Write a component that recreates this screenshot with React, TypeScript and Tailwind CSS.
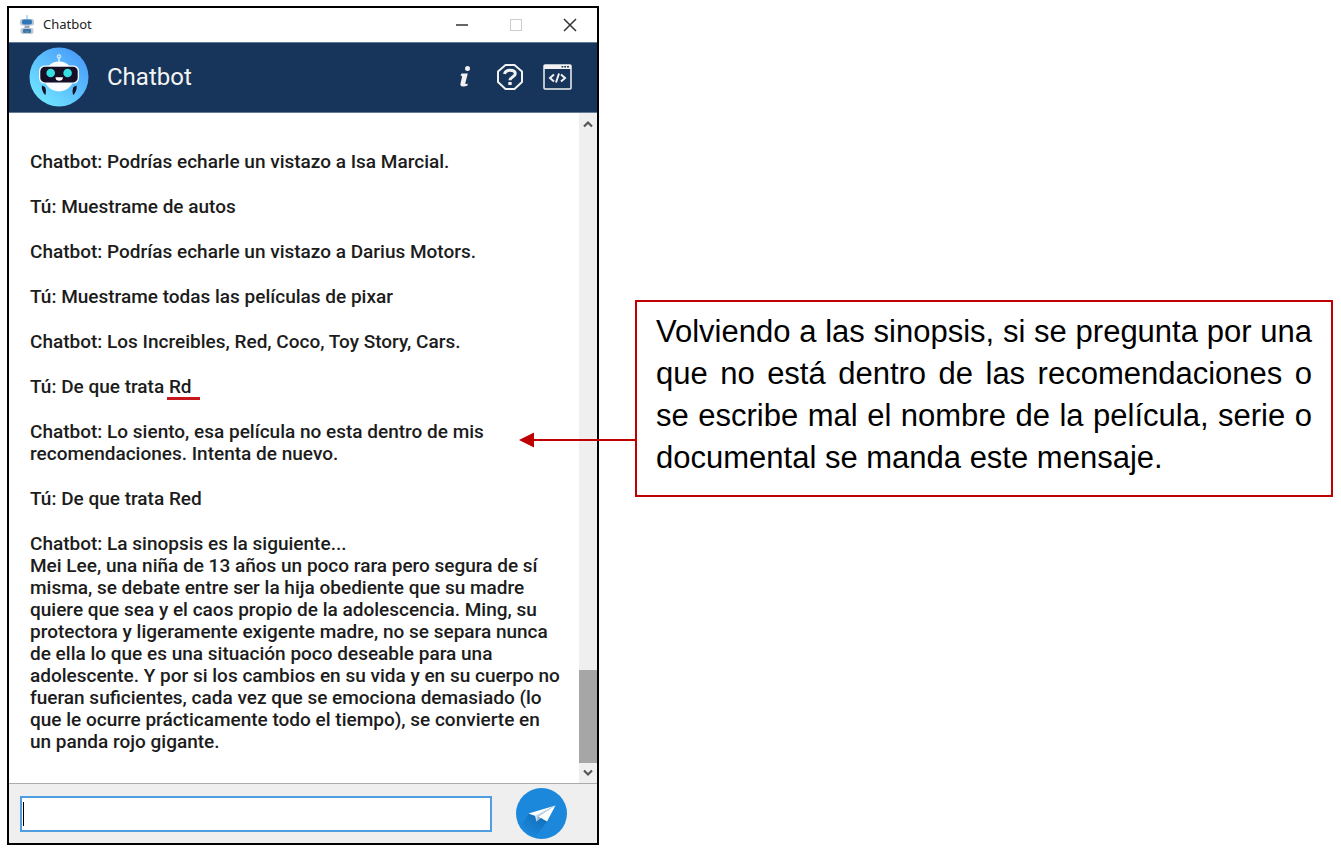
import React from "react";

const messages: { from: string; lines: React.ReactNode[] }[] = [
  { from: "Chatbot", lines: ["Podrías echarle un vistazo a Isa Marcial."] },
  { from: "Tú", lines: ["Muestrame de autos"] },
  { from: "Chatbot", lines: ["Podrías echarle un vistazo a Darius Motors."] },
  { from: "Tú", lines: ["Muestrame todas las películas de pixar"] },
  { from: "Chatbot", lines: ["Los Increibles, Red, Coco, Toy Story, Cars."] },
  {
    from: "Tú",
    lines: [
      <React.Fragment key="rd">
        De que trata{" "}
        <span className="relative">
          Rd
          <span className="absolute -right-2 -bottom-0.5 -left-0.5 h-[3px] bg-[#c8161d]" />
        </span>
      </React.Fragment>,
    ],
  },
  {
    from: "Chatbot",
    lines: ["Lo siento, esa película no esta dentro de mis", "recomendaciones. Intenta de nuevo."],
  },
  { from: "Tú", lines: ["De que trata Red"] },
  {
    from: "Chatbot",
    lines: [
      "La sinopsis es la siguiente...",
      "Mei Lee, una niña de 13 años un poco rara pero segura de sí",
      "misma, se debate entre ser la hija obediente que su madre",
      "quiere que sea y el caos propio de la adolescencia. Ming, su",
      "protectora y ligeramente exigente madre, no se separa nunca",
      "de ella lo que es una situación poco deseable para una",
      "adolescente. Y por si los cambios en su vida y en su cuerpo no",
      "fueran suficientes, cada vez que se emociona demasiado (lo",
      "que le ocurre prácticamente todo el tiempo), se convierte en",
      "un panda rojo gigante.",
    ],
  },
];

function MiniRobot() {
  return (
    <svg viewBox="0 0 16 20" className="h-5 w-4" aria-hidden="true">
      <path d="M8 0v4" stroke="#8fd4f8" strokeWidth="1.4" />
      <rect x="1" y="4" width="14" height="6.5" rx="2.5" fill="#bcc3d2" />
      <rect x="3" y="4.5" width="10" height="5" rx="2" fill="#2f78b8" />
      <rect x="5.5" y="10.5" width="5" height="2.5" fill="#98a5b8" />
      <rect x="1.5" y="13" width="13" height="6" rx="2" fill="#c3c7d4" />
      <rect x="4" y="14" width="8" height="4" rx="1" fill="#3a72b0" />
      <path d="M6 17h4" stroke="#4fb08c" />
    </svg>
  );
}

function Avatar() {
  return (
    <svg viewBox="0 0 60 60" className="size-[60px]" aria-hidden="true">
      <defs>
        <linearGradient id="sky" x1="0.15" y1="0.9" x2="0.85" y2="0.1">
          <stop offset="0" stopColor="#6fe4ff" />
          <stop offset="1" stopColor="#4a9dfb" />
        </linearGradient>
      </defs>
      <circle cx="30" cy="30" r="29.5" fill="url(#sky)" />
      <path d="M30 10v7" stroke="#e8f4ff" strokeWidth="1.4" />
      <circle cx="30" cy="9.5" r="1.8" fill="#7fc4ff" stroke="#e8f4ff" strokeWidth="1" />
      <circle cx="30" cy="29.5" r="15" fill="#fafcff" />
      <rect x="10" y="18.5" width="40" height="18" rx="5.5" fill="#f4f8ff" />
      <rect x="11.3" y="19.8" width="37.4" height="15.6" rx="4.6" fill="#150f27" />
      <circle cx="21.7" cy="26" r="4.3" fill="#35dfe0" />
      <circle cx="38.6" cy="26" r="4.3" fill="#35dfe0" />
      <path d="M26.5 30.3h7.4a3.7 3.5 0 0 1-7.4 0z" fill="#fff" />
      <path d="M13 38.5l3 1.5c1.3 2.5 1 5.5.4 8C14 46 12.3 42 13 38.5z" fill="#150f27" />
      <path d="M47.5 38.5l-3 1.5c-1.3 2.5-1 5.5-.4 8 2.4-2 4-6 3.4-9.5z" fill="#150f27" />
    </svg>
  );
}

function InfoIcon() {
  return (
    <svg viewBox="0 0 24 30" className="h-[30px] w-6" fill="#f1f1f1" aria-hidden="true">
      <circle cx="14.5" cy="6.5" r="2.5" />
      <path d="M8.5 11.5h6.300l-2.500 9.800c-.2 1 .8 1 2.300.2v1.900c-1.600.8-3.300 1.200-4.800 1.100-1.900-.1-2.700-1.400-2.300-3.100l1.500-6.300c.2-1-.2-1.300-1.500-1.300z" />
    </svg>
  );
}

function HelpIcon() {
  return (
    <svg viewBox="0 0 32 30" className="h-[30px] w-8" fill="none" stroke="#f1f1f1" aria-hidden="true">
      <path d="M11.5 3h9L28 9.500v10.500L20.500 27h-9L4 20V9.500z" strokeWidth="2" strokeLinejoin="round" />
      <path d="M10.5 12c.6-2.500 2.600-3.800 5.500-3.800 3.300 0 5.300 1.300 5.300 3.600 0 3.300-5.300 3.100-5.300 6.400" strokeWidth="3" />
      <path d="M14.3 21.500h3.400" strokeWidth="3" />
    </svg>
  );
}

function CodeIcon() {
  return (
    <svg viewBox="0 0 29 30" className="h-[30px] w-[29px]" fill="none" stroke="#f1f1f1" aria-hidden="true">
      <rect x="1" y="3" width="27" height="24" rx="1" strokeWidth="1.5" />
      <path d="M1 5h27" strokeWidth="4" />
      <path d="M18.5 4.800h8" stroke="#17345a" strokeWidth="1.6" strokeDasharray="1.8 1" />
      <path d="M11 12.500L7 16l4 3.500M18 12.500l4 3.500-4 3.500M16 11.500l-3 9" strokeWidth="2" />
    </svg>
  );
}

function SendIcon() {
  return (
    <svg viewBox="0 0 51 51" className="size-[51px]" aria-hidden="true">
      <defs>
        <linearGradient id="shade" x1="1" y1="0" x2="0.2" y2="1">
          <stop offset="0" stopColor="#0c5fa3" />
          <stop offset="1" stopColor="#1b88dc" />
        </linearGradient>
      </defs>
      <circle cx="25.5" cy="25.5" r="25.5" fill="#1b88dc" />
      <path d="M12.5 26L6.500 36a25 25 0 0 0 12.500 13L31 33.500l8-15.500z" fill="url(#shade)" />
      <path d="M39.5 17.500L12.500 25.500l7 2.500z" fill="#fff" />
      <path d="M39.5 17.500L19 28l1.500 5.500z" fill="#d3e0ec" />
      <path d="M39.5 17.500L22 28l-1.500 5.500 4-3.500z" fill="#8fb2cf" />
      <path d="M39.5 17.500L22.500 28.500l8.500 5z" fill="#fff" />
    </svg>
  );
}

function Chevron({ up = false }: { up?: boolean }) {
  return (
    <svg viewBox="0 0 10 8" className="h-2 w-[10px]" fill="none" stroke="#555" strokeWidth="2.2" aria-hidden="true">
      <path d={up ? "M1 6.5l4-4 4 4" : "M1 1.5l4 4 4-4"} />
    </svg>
  );
}

function ChatWindow() {
  return (
    <section className="flex min-w-0 flex-col border-2 border-black bg-white">
      <div className="flex h-[34px] items-center pl-[10px]">
        <MiniRobot />
        <span className="ml-2 font-['Noto_Sans',sans-serif] text-[13px] text-[#222]">Chatbot</span>
        <div className="ml-auto flex h-full">
          <button aria-label="Minimizar" className="grid w-[54px] place-items-center">
            <svg viewBox="0 0 14 14" className="size-[14px]" stroke="#555" strokeWidth="1.8"><path d="M1 7h12" /></svg>
          </button>
          <button aria-label="Maximizar" className="grid w-[54px] place-items-center">
            <svg viewBox="0 0 14 14" className="size-[14px]" stroke="#ccc" fill="none"><rect x="1.5" y="1.5" width="11" height="11" /></svg>
          </button>
          <button aria-label="Cerrar" className="grid w-[54px] place-items-center">
            <svg viewBox="0 0 14 14" className="size-[14px]" stroke="#333" strokeWidth="1.5"><path d="M1 1l12 12M13 1L1 13" /></svg>
          </button>
        </div>
      </div>

      <header className="flex h-[71px] items-center border-y border-[#62799a] bg-[#17345a] pr-[25px] pb-px pl-5">
        <Avatar />
        <h1 className="ml-[18px] font-['Roboto',sans-serif] text-2xl text-[#f4f4f4]">Chatbot</h1>
        <div className="ml-auto flex items-center gap-[17px]">
          <button aria-label="Información"><InfoIcon /></button>
          <button aria-label="Ayuda"><HelpIcon /></button>
          <button aria-label="Código"><CodeIcon /></button>
        </div>
      </header>

      <div className="flex">
        <div className="flex min-h-[670px] min-w-0 flex-1 flex-col gap-[23px] pt-[38px] pb-6 pl-[21px] font-['Roboto',sans-serif] text-[19px] leading-[22px] font-medium whitespace-nowrap text-[#1c1c1c]">
          {messages.map((message, i) => (
            <p key={i}>
              {message.from}:{" "}
              {message.lines.map((line, j) => (
                <React.Fragment key={j}>
                  {j > 0 && <br />}
                  {line}
                </React.Fragment>
              ))}
            </p>
          ))}
        </div>
        <div className="flex w-[18px] flex-col bg-[#efefef]">
          <button aria-label="Subir" className="grid h-[22px] place-items-center"><Chevron up /></button>
          <div className="flex flex-1 flex-col justify-end">
            <div className="h-[93px] bg-[#a6a6a6]" />
          </div>
          <button aria-label="Bajar" className="grid h-5 place-items-center"><Chevron /></button>
        </div>
      </div>

      <form className="flex h-[60px] items-center gap-6 border-t border-[#ababab] bg-[#efefef] pr-[30px] pl-[11px]" onSubmit={(e) => e.preventDefault()}>
        <div className="relative flex min-w-0 flex-1">
          <input aria-label="Mensaje" className="h-9 w-full border-2 border-[#4f9fe0] bg-white px-1 font-['Roboto',sans-serif] text-[19px] outline-none" />
          <span className="absolute top-[6px] left-[3px] h-6 w-px bg-black" />
        </div>
        <button aria-label="Enviar" type="submit"><SendIcon /></button>
      </form>
    </section>
  );
}

function Note() {
  return (
    <aside className="relative mt-[294px] min-w-0 border-2 border-[#c00000] px-[19px] pt-[9px] pb-4">
      <p className="text-justify font-['Liberation_Sans',Arial,sans-serif] text-[31px] leading-[42px] text-black">
        Volviendo a las sinopsis, si se pregunta por una que no está dentro de las recomendaciones o se escribe mal el
        nombre de la película, serie o documental se manda este mensaje.
      </p>
      <svg viewBox="0 0 118 16" className="absolute top-[130px] right-full h-4 w-[118px]" aria-hidden="true">
        <path d="M14 8h104" stroke="#c00000" strokeWidth="2" />
        <path d="M0 8L15 0.5v15z" fill="#c00000" />
      </svg>
    </aside>
  );
}

export default function App() {
  return (
    <main className="grid min-h-screen grid-cols-[592fr_698fr] items-start gap-9 bg-white pt-[6px] pr-2 pb-[6px] pl-[7px]">
      <ChatWindow />
      <Note />
    </main>
  );
}
